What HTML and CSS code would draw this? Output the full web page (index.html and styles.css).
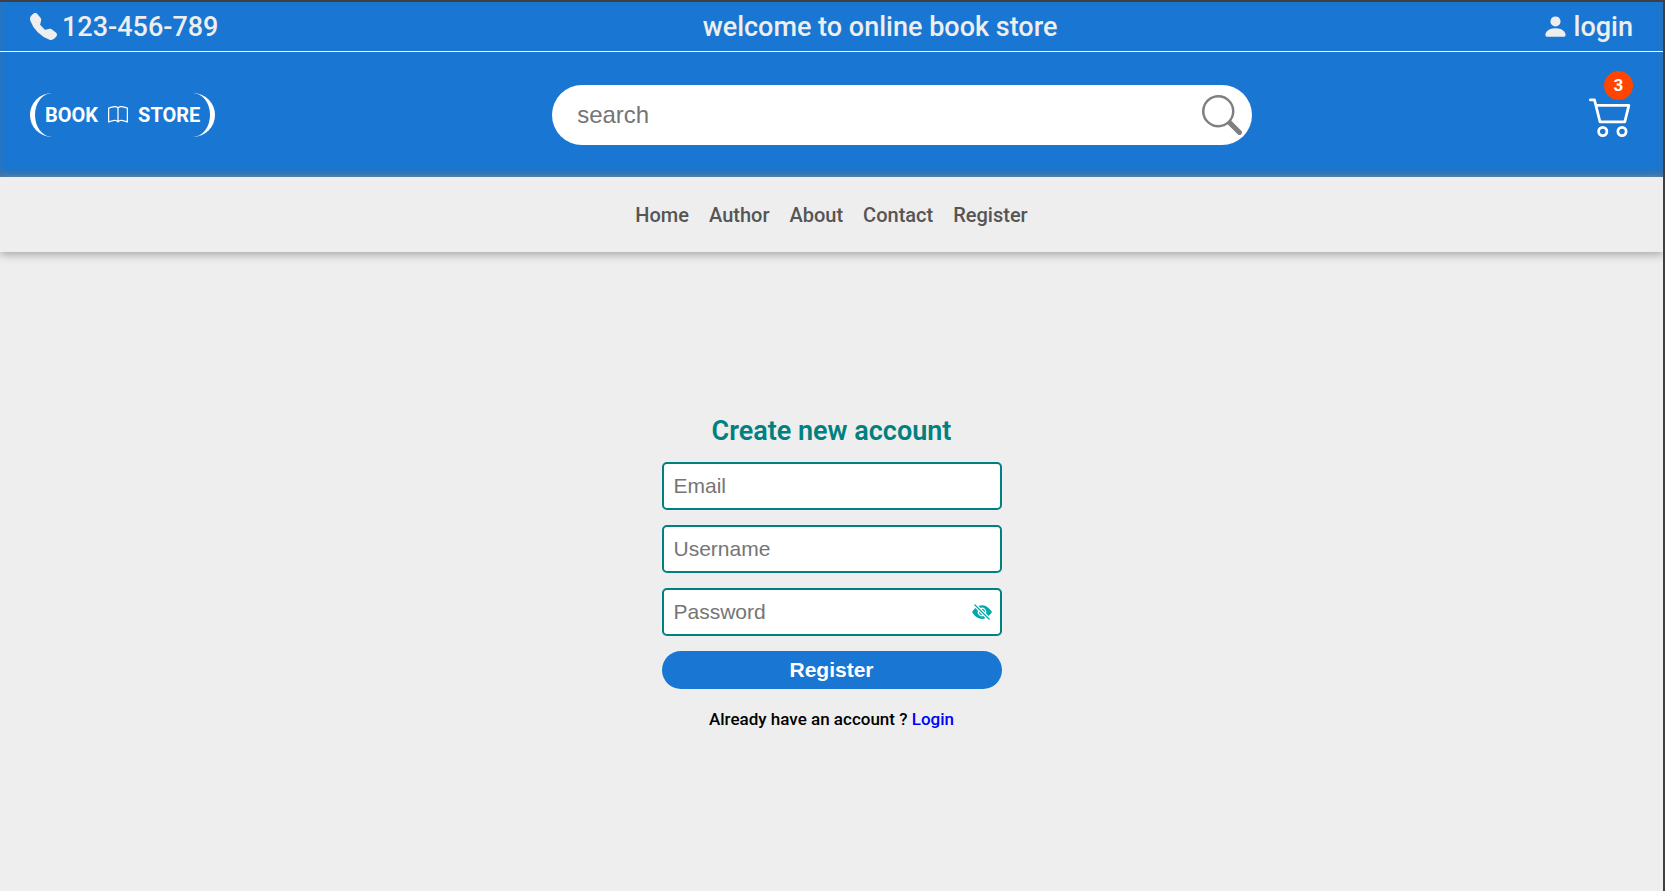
FILE: index.html
```html
<!DOCTYPE html>
<html lang="en">
<head>
<meta charset="utf-8">
<title>Book Store</title>
<link rel="stylesheet" href="styles.css">
</head>
<body>
<header class="header">
  <div class="topbar">
    <div class="topbar-item">
      <svg class="topbar-icon" viewBox="0 0 16 16" aria-hidden="true"><path d="M1.885.511a1.745 1.745 0 0 1 2.61.163L6.29 2.98c.329.423.445.974.315 1.494l-.547 2.19a.678.678 0 0 0 .178.643l2.457 2.457a.678.678 0 0 0 .644.178l2.189-.547a1.745 1.745 0 0 1 1.494.315l2.306 1.794c.829.645.905 1.87.163 2.611l-1.034 1.034c-.74.74-1.846 1.065-2.877.702a18.634 18.634 0 0 1-7.01-4.42 18.634 18.634 0 0 1-4.42-7.009c-.362-1.03-.037-2.137.703-2.877L1.885.511z"/></svg>
      <span>123-456-789</span>
    </div>
    <div>welcome to online book store</div>
    <a class="topbar-item" href="#login">
      <svg class="topbar-icon" viewBox="0 0 16 16" aria-hidden="true"><path d="M3 14s-1 0-1-1 1-4 6-4 6 3 6 4-1 1-1 1H3zm5-6a3 3 0 1 0 0-6 3 3 0 0 0 0 6z"/></svg>
      <span>login</span>
    </a>
  </div>
  <div class="masthead">
    <a class="logo" href="#home">
      <b>BOOK</b>
      <svg class="logo-icon" viewBox="0 0 16 16" aria-hidden="true"><path d="M1 2.828c.885-.37 2.154-.769 3.388-.893 1.33-.134 2.458.063 3.112.752v9.746c-.935-.53-2.12-.603-3.213-.493-1.18.12-2.37.461-3.287.811V2.828zm7.5-.141c.654-.689 1.782-.886 3.112-.752 1.234.124 2.503.523 3.388.893v9.923c-.918-.35-2.107-.692-3.287-.81-1.094-.111-2.278-.039-3.213.492V2.687zM8 1.783C7.015.936 5.587.81 4.287.94c-1.514.153-3.042.672-3.994 1.105A.5.5 0 0 0 0 2.5v11a.5.5 0 0 0 .707.455c.882-.4 2.303-.881 3.68-1.02 1.409-.142 2.59.087 3.223.877a.5.5 0 0 0 .78 0c.633-.79 1.814-1.019 3.222-.877 1.378.139 2.8.62 3.681 1.02A.5.5 0 0 0 16 13.5v-11a.5.5 0 0 0-.293-.455c-.952-.433-2.48-.952-3.994-1.105C10.413.809 8.985.936 8 1.783z"/></svg>
      <b>STORE</b>
    </a>
    <form class="search">
      <input class="search-input" type="search" placeholder="search" aria-label="search">
      <button class="search-button" type="submit" aria-label="Submit search">
        <svg class="search-icon" viewBox="0 0 16 16" aria-hidden="true"><path d="M11.742 10.344a6.5 6.5 0 1 0-1.397 1.398h-.001c.03.04.062.078.098.115l3.85 3.85a1 1 0 0 0 1.415-1.414l-3.85-3.85a1.007 1.007 0 0 0-.115-.1zM12 6.5a5.5 5.5 0 1 1-11 0 5.5 5.5 0 0 1 11 0z"/></svg>
      </button>
    </form>
    <a class="cart" href="#cart" aria-label="Cart">
      <svg class="cart-icon" viewBox="0 0 16 16" aria-hidden="true"><path d="M0 2.5A.5.5 0 0 1 .5 2H2a.5.5 0 0 1 .485.379L2.89 4H14.5a.5.5 0 0 1 .485.621l-1.5 6A.5.5 0 0 1 13 11H4a.5.5 0 0 1-.485-.379L1.61 3H.5a.5.5 0 0 1-.5-.5zM3.14 5l1.25 5h8.22l1.25-5H3.14zM5 13a1 1 0 1 0 0 2 1 1 0 0 0 0-2zm-2 1a2 2 0 1 1 4 0 2 2 0 0 1-4 0zm9-1a1 1 0 1 0 0 2 1 1 0 0 0 0-2zm-2 1a2 2 0 1 1 4 0 2 2 0 0 1-4 0z"/></svg>
      <span class="cart-badge">3</span>
    </a>
  </div>
</header>
<nav class="nav">
  <a href="#home">Home</a>
  <a href="#author">Author</a>
  <a href="#about">About</a>
  <a href="#contact">Contact</a>
  <a href="#register">Register</a>
</nav>
<main class="main">
  <form class="form">
    <h1 class="form-title">Create new account</h1>
    <input class="form-input" type="email" placeholder="Email" aria-label="Email">
    <input class="form-input" type="text" placeholder="Username" aria-label="Username">
    <div class="password">
      <input class="form-input" type="password" placeholder="Password" aria-label="Password">
      <button class="password-toggle" type="button" aria-label="Show password">
        <svg class="password-icon" viewBox="0 0 16 16" aria-hidden="true"><path d="m10.79 12.912-1.614-1.615a3.5 3.5 0 0 1-4.474-4.474l-2.06-2.06C.938 6.278 0 8 0 8s3 5.5 8 5.5a7.029 7.029 0 0 0 2.79-.588zM5.21 3.088A7.028 7.028 0 0 1 8 2.5c5 0 8 5.5 8 5.5s-.939 1.721-2.641 3.238l-2.062-2.062a3.5 3.5 0 0 0-4.474-4.474L5.21 3.089z"/><path d="M5.525 7.646a2.5 2.5 0 0 0 2.829 2.829l-2.83-2.829zm4.95.708-2.829-2.83a2.5 2.5 0 0 1 2.829 2.829zm3.171 6-12-12 .708-.708 12 12-.708.708z"/></svg>
      </button>
    </div>
    <button class="form-submit" type="submit">Register</button>
    <p class="form-note">Already have an account ? <a class="form-link" href="#login">Login</a></p>
  </form>
</main>
</body>
</html>
```

FILE: styles.css
```css
* {
  box-sizing: border-box;
  margin: 0;
  padding: 0;
}

body {
  display: flex;
  flex-direction: column;
  min-height: 100vh;
  border-top: 2px solid #3f4042;
  border-right: 2px solid #3f4042;
  background: #eee;
  font-family: Roboto, "Liberation Sans", sans-serif;
  font-weight: 500;
}

a {
  text-decoration: none;
}

svg {
  display: block;
  fill: currentColor;
}

button {
  border: 0;
  background: none;
  cursor: pointer;
}

.header {
  background: #1976d2;
  box-shadow: inset 0 -5px 8px -2px #4a7396;
}

.topbar {
  display: flex;
  align-items: center;
  justify-content: space-between;
  height: 50px;
  padding: 0 30px;
  border-bottom: 1px solid #fff;
  color: #eee;
  font-size: 27px;
}

.topbar-item {
  display: flex;
  align-items: center;
  gap: 5px;
  color: inherit;
}

.topbar-icon {
  width: 27px;
  height: 27px;
}

.masthead {
  display: flex;
  align-items: center;
  justify-content: space-between;
  height: 125px;
  padding: 0 30px;
}

.logo {
  display: flex;
  align-items: center;
  gap: 10px;
  height: 44px;
  padding: 0 10px;
  border: solid #fff;
  border-width: 0 5px;
  border-radius: 22px;
  color: #fff;
  font-size: 20px;
}

.logo-icon {
  width: 20px;
  height: 20px;
}

.search {
  display: flex;
  align-items: center;
  width: 700px;
  height: 60px;
  padding: 0 10px 0 25px;
  border-radius: 30px;
  background: #fff;
}

.search-input {
  flex: 1;
  min-width: 0;
  border: 0;
  outline: 0;
  background: none;
  font: 24px "Liberation Sans", sans-serif;
}

.search-button {
  color: gray;
}

.search-icon {
  width: 40px;
  height: 40px;
}

.cart {
  position: relative;
  color: #fff;
}

.cart-icon {
  width: 44px;
  height: 44px;
}

.cart-badge {
  position: absolute;
  top: -22px;
  right: 0;
  width: 29px;
  height: 29px;
  border-radius: 50%;
  background: #ff4500;
  font-size: 17px;
  font-weight: 700;
  line-height: 29px;
  text-align: center;
}

.nav {
  display: flex;
  align-items: center;
  justify-content: center;
  gap: 20px;
  height: 75px;
  box-shadow: 0 3px 8px #aaa;
  font-size: 20px;
}

.nav a {
  color: #555;
}

.main {
  display: flex;
  flex: 1;
  align-items: center;
  justify-content: center;
}

.form {
  display: flex;
  flex-direction: column;
  gap: 15px;
  width: 340px;
}

.form-title {
  color: teal;
  font-size: 27px;
  font-weight: 600;
  text-align: center;
}

.form-input {
  width: 100%;
  height: 48px;
  padding: 0 10px;
  border: 2px solid teal;
  border-radius: 5px;
  background: #fff;
  font: 21px "Liberation Sans", sans-serif;
}

.password {
  position: relative;
}

.password-toggle {
  position: absolute;
  top: 14px;
  right: 10px;
  color: #0aa;
}

.password-icon {
  width: 20px;
  height: 20px;
}

.form-submit {
  height: 38px;
  border-radius: 19px;
  background: #1976d2;
  color: #fff;
  font: bold 21px "Liberation Sans", sans-serif;
}

.form-note {
  margin-top: 5px;
  font-size: 17px;
  text-align: center;
}

.form-link {
  color: #00f;
}
```
